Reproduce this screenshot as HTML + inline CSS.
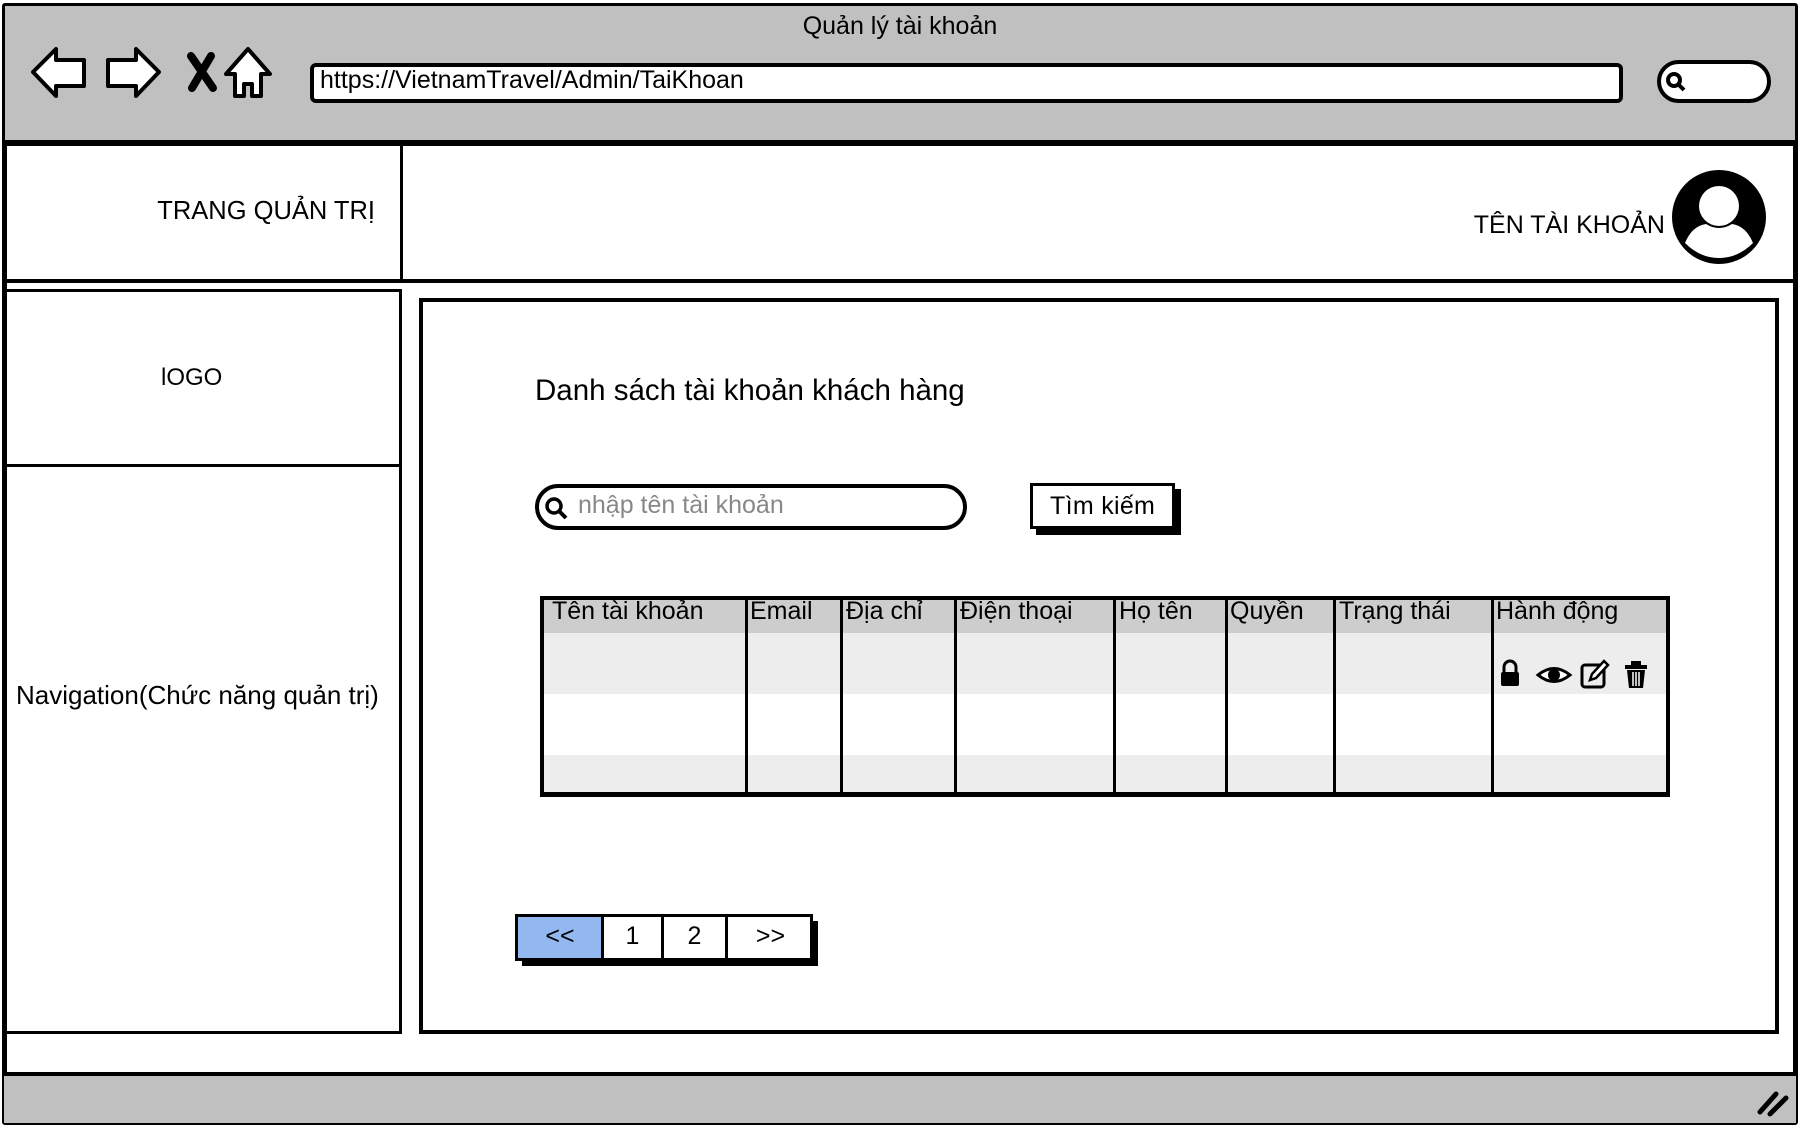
<!DOCTYPE html>
<html><head><meta charset="utf-8"><style>
*{margin:0;padding:0;box-sizing:border-box}
body{width:1800px;height:1128px;background:#fff;position:relative;overflow:hidden;font-family:"Liberation Sans",sans-serif;color:#000}
.a{position:absolute}
.t{position:absolute;white-space:nowrap}
</style></head><body>
<div class="a" style="left:2px;top:3px;width:1796px;height:1122px;border:5px solid #000;border-radius:3px"></div>
<div class="a" style="left:5px;top:6px;width:1790px;height:140px;background:#c0c0c0;border-bottom:6px solid #000"></div>
<div class="t" style="left:0;width:1800px;text-align:center;top:12px;font-size:25px">Quản lý tài khoản</div>
<svg class="a" style="left:28px;top:44px" width="260" height="60" viewBox="0 0 260 60">
 <g fill="#fff" stroke="#000" stroke-width="4" stroke-linejoin="round">
  <path d="M5 28 L28 5 L28 16 L56 16 L56 42 L28 42 L28 52 Z"/>
  <path d="M131 28 L108 5 L108 16 L80 16 L80 42 L108 42 L108 52 Z"/>
  <path d="M220 5 L242 30 L233 30 L233 52 L224 52 L224 40 L216 40 L216 52 L207 52 L207 30 L198 30 Z"/>
 </g>
 <path d="M163 12 L185 44 M183 12 L164 44" stroke="#000" stroke-width="8" stroke-linecap="round"/>
</svg>
<div class="a" style="left:310px;top:63px;width:1313px;height:40px;background:#fff;border:4px solid #000;border-radius:6px"></div>
<div class="t" style="left:320px;top:66px;font-size:25px">https://VietnamTravel/Admin/TaiKhoan</div>
<div class="a" style="left:1657px;top:60px;width:114px;height:43px;background:#fff;border:4px solid #000;border-radius:22px"></div>
<svg class="a" style="left:1664px;top:70px" width="24" height="24"><circle cx="10" cy="10" r="6" fill="none" stroke="#000" stroke-width="4"/><path d="M14 14 L20 20" stroke="#000" stroke-width="4"/></svg>
<div class="a" style="left:4px;top:146px;width:1792px;height:137px;border-bottom:4px solid #000"></div>
<div class="a" style="left:400px;top:146px;width:3px;height:137px;background:#000"></div>
<div class="t" style="right:1425px;top:197px;font-size:25.5px">TRANG QUẢN TRỊ</div>
<div class="t" style="right:135px;top:211px;font-size:25px">TÊN TÀI KHOẢN</div>
<svg class="a" style="left:1670px;top:168px" width="98" height="98" viewBox="0 0 98 98">
 <circle cx="49" cy="49" r="47" fill="#000"/>
 <circle cx="49" cy="38" r="20" fill="#fff"/>
 <path d="M15 75 Q22 58 36 56 Q49 64 62 56 Q76 58 83 75 Q68 90 49 90 Q30 90 15 75 Z" fill="#fff"/>
</svg>
<div class="a" style="left:4px;top:289px;width:398px;height:745px;border:3px solid #000;border-left:none"></div>
<div class="a" style="left:4px;top:464px;width:398px;height:3px;background:#000"></div>
<div class="t" style="left:161px;top:364px;font-size:24px">lOGO</div>
<div class="t" style="left:16px;top:680px;font-size:26px">Navigation(Chức năng quản trị)</div>
<div class="a" style="left:419px;top:298px;width:1360px;height:736px;border:4px solid #000"></div>
<div class="t" style="left:535px;top:374px;font-size:29.5px">Danh sách tài khoản khách hàng</div>
<div class="a" style="left:535px;top:484px;width:432px;height:46px;border:4px solid #000;border-radius:23px"></div>
<svg class="a" style="left:544px;top:496px" width="26" height="26"><circle cx="10" cy="10" r="7" fill="none" stroke="#000" stroke-width="3.5"/><path d="M15 15 L22 22" stroke="#000" stroke-width="4"/></svg>
<div class="t" style="left:578px;top:491px;font-size:25px;color:#888">nhập tên tài khoản</div>
<div class="a" style="left:1036px;top:489px;width:145px;height:46px;background:#000"></div>
<div class="a" style="left:1030px;top:483px;width:145px;height:46px;background:#fff;border:3px solid #000"></div>
<div class="t" style="left:1050px;top:492px;font-size:25px;letter-spacing:0.3px">Tìm kiếm</div>
<div class="a" style="left:540px;top:596px;width:1130px;height:201px;border:4px solid #000;border-bottom-width:5px;overflow:hidden">
 <div class="a" style="left:0;top:0;width:100%;height:33px;background:#cdcdcd"></div>
 <div class="a" style="left:0;top:33px;width:100%;height:61px;background:#ededed"></div>
 <div class="a" style="left:0;top:155px;width:100%;height:50px;background:#ededed"></div>
</div>
<div class="a" style="left:745px;top:596px;width:3px;height:201px;background:#000"></div>
<div class="a" style="left:840px;top:596px;width:3px;height:201px;background:#000"></div>
<div class="a" style="left:954px;top:596px;width:3px;height:201px;background:#000"></div>
<div class="a" style="left:1113px;top:596px;width:3px;height:201px;background:#000"></div>
<div class="a" style="left:1225px;top:596px;width:3px;height:201px;background:#000"></div>
<div class="a" style="left:1333px;top:596px;width:3px;height:201px;background:#000"></div>
<div class="a" style="left:1491px;top:596px;width:3px;height:201px;background:#000"></div>
<div class="t" style="top:597px;left:552px;font-size:25px">Tên tài khoản</div>
<div class="t" style="top:597px;left:750px;font-size:25px">Email</div>
<div class="t" style="top:597px;left:846px;font-size:25px">Địa chỉ</div>
<div class="t" style="top:597px;left:960px;font-size:25px">Điện thoại</div>
<div class="t" style="top:597px;left:1119px;font-size:25px">Họ tên</div>
<div class="t" style="top:597px;left:1230px;font-size:25px">Quyền</div>
<div class="t" style="top:597px;left:1339px;font-size:25px">Trạng thái</div>
<div class="t" style="top:597px;left:1496px;font-size:25px">Hành động</div>
<svg class="a" style="left:1498px;top:658px" width="160" height="32" viewBox="0 0 160 32">
 <path d="M6 14 V9 A6 6 0 0 1 18 9 V14" fill="none" stroke="#000" stroke-width="3"/>
 <rect x="3" y="14" width="18" height="14" rx="2" fill="#000"/>
 <path d="M40 17 Q56 4 72 17 Q56 30 40 17 Z" fill="#fff" stroke="#000" stroke-width="3"/>
 <circle cx="56" cy="17" r="6" fill="#000"/>
 <rect x="84" y="7" width="22" height="22" rx="3" fill="none" stroke="#000" stroke-width="3"/>
 <path d="M92 22 L94 16 L106 3 L110 7 L98 20 Z" fill="#fff" stroke="#000" stroke-width="2.5"/>
 <rect x="127" y="7" width="22" height="4" fill="#000"/><rect x="133" y="3" width="10" height="4" fill="#000"/>
 <path d="M129 12 H147 L145 30 H131 Z" fill="#000"/>
 <path d="M135 14 V28 M138 14 V28 M141 14 V28" stroke="#fff" stroke-width="1.5"/>
</svg>
<div class="a" style="left:522px;top:921px;width:296px;height:45px;background:#000"></div>
<div class="a" style="left:515px;top:914px;width:298px;height:47px;background:#fff;border:3px solid #000"></div>
<div class="a" style="left:518px;top:917px;width:84px;height:41px;background:#92b8ef"></div>
<div class="a" style="left:601px;top:914px;width:3px;height:47px;background:#000"></div>
<div class="a" style="left:661px;top:914px;width:3px;height:47px;background:#000"></div>
<div class="a" style="left:725px;top:914px;width:3px;height:47px;background:#000"></div>
<div class="t" style="left:518px;width:84px;text-align:center;top:922px;font-size:25px">&lt;&lt;</div>
<div class="t" style="left:604px;width:57px;text-align:center;top:922px;font-size:25px">1</div>
<div class="t" style="left:664px;width:61px;text-align:center;top:922px;font-size:25px">2</div>
<div class="t" style="left:728px;width:85px;text-align:center;top:922px;font-size:25px">&gt;&gt;</div>
<div class="a" style="left:4px;top:1072px;width:1792px;height:51px;background:#c0c0c0;border-top:4px solid #000"></div>
<svg class="a" style="left:1756px;top:1088px" width="34" height="30"><path d="M4 24 L20 6 M14 26 L30 10" stroke="#000" stroke-width="5" stroke-linecap="round"/></svg>
</body></html>
